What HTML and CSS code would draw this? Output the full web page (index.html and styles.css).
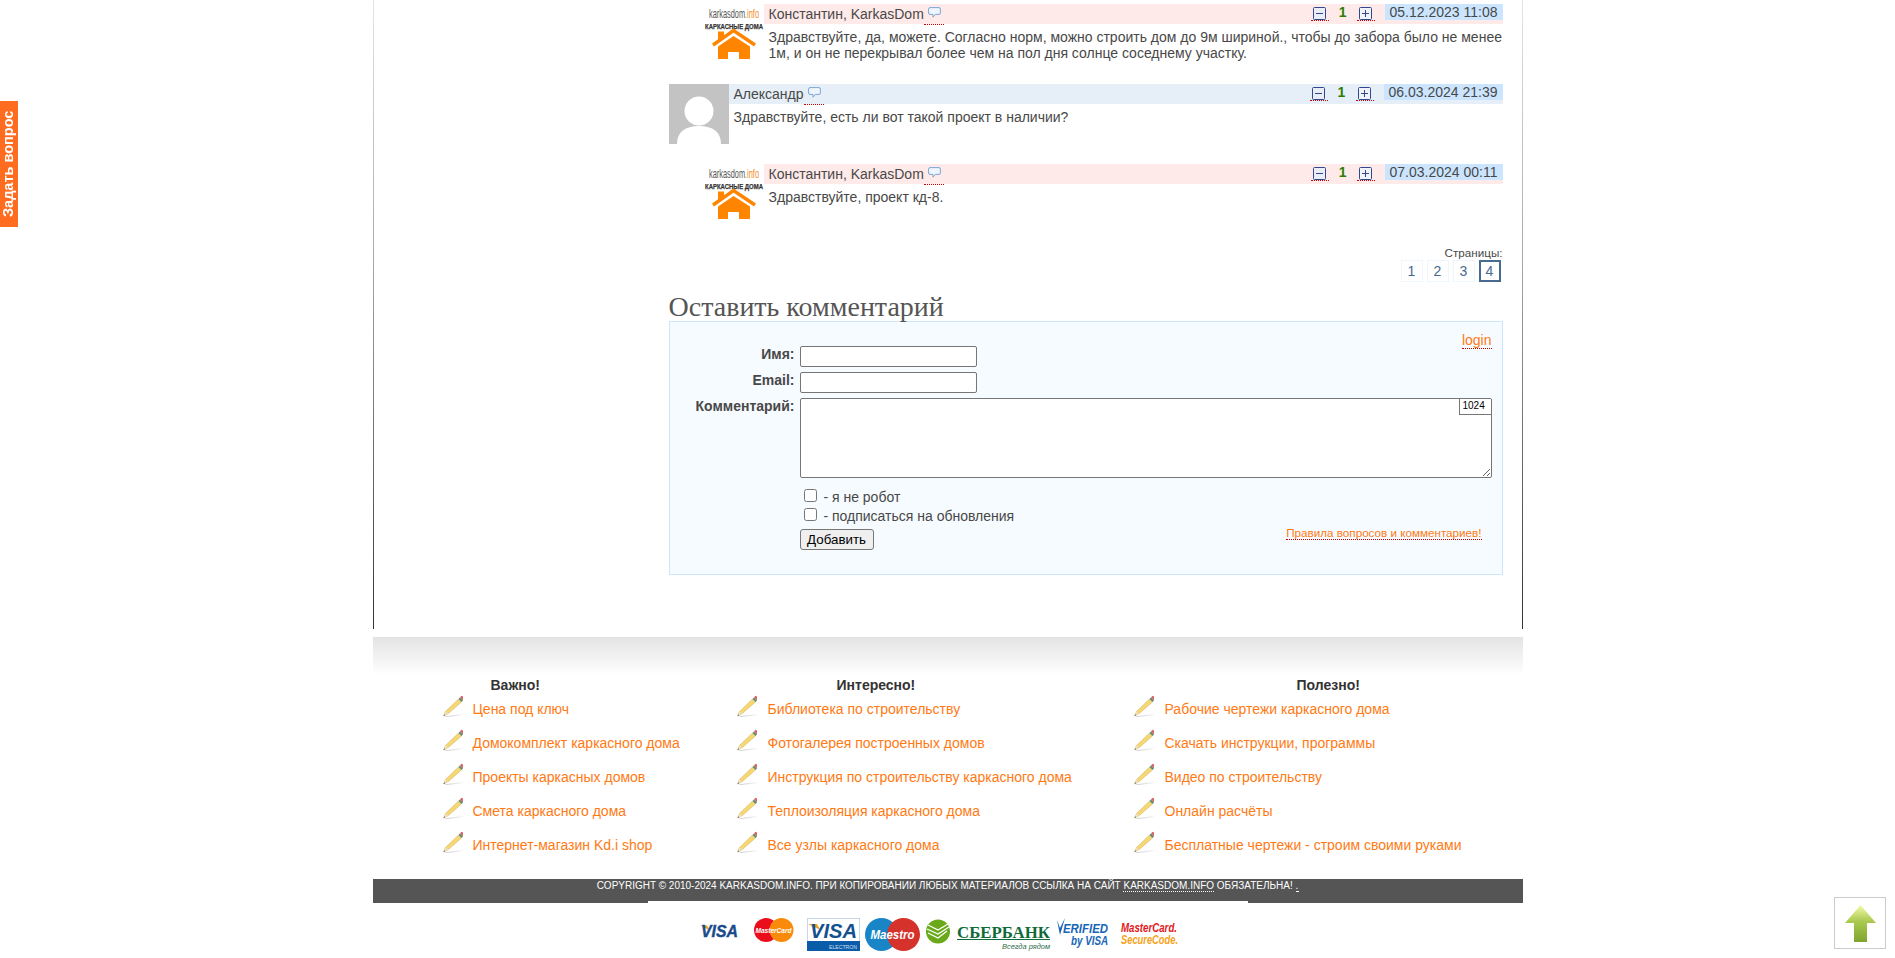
FILE: index.html
```html
<!DOCTYPE html>
<html lang="ru">
<head>
<meta charset="utf-8">
<title>Каркасный дом</title>
<link rel="stylesheet" href="styles.css">
</head>
<body>
<svg class="defs" width="0" height="0" aria-hidden="true">
  <defs>
    <linearGradient id="arrowGrad" x1="0" y1="0" x2="0" y2="1"><stop offset="0" stop-color="#f4fba8"/><stop offset=".45" stop-color="#a9c94e"/><stop offset="1" stop-color="#7fa42f"/></linearGradient>
    <linearGradient id="shadowGrad" x1="0" y1="0" x2="1" y2="0"><stop offset="0" stop-color="#999"/><stop offset="1" stop-color="#f4f4f4"/></linearGradient>
    <symbol id="bubble" viewBox="0 0 13 11">
      <path d="M2 .6h9a1.4 1.4 0 0 1 1.4 1.4v4a1.4 1.4 0 0 1-1.4 1.4H7.2L5 10.2V7.4H2A1.4 1.4 0 0 1 .6 6V2A1.4 1.4 0 0 1 2 .6z" fill="#eef5fc" stroke="#7ea6d2"/>
    </symbol>
    <symbol id="minus" viewBox="0 0 13 13">
      <rect x=".5" y=".5" width="12" height="12" rx="1" fill="#e9edf5" stroke="#33478f"/>
      <path d="M3 6.5h7" stroke="#33478f"/>
    </symbol>
    <symbol id="plus" viewBox="0 0 13 13">
      <rect x=".5" y=".5" width="12" height="12" rx="1" fill="#f0f3f9" stroke="#33478f"/>
      <path d="M3 6.5h7M6.5 3v7" stroke="#33478f"/>
    </symbol>
    <symbol id="pencil" viewBox="0 0 20 22">
      <path d="M1 21.500 L20 18.800 V20.200 L4 22z" fill="url(#shadowGrad)" opacity=".55"/>
      <path d="M.5 21 L2.500 16.500 L15.500 4 L18.500 7 L5 18.800z" fill="#f6d873" stroke="#d2ad5c" stroke-width=".5"/>
      <path d="M.5 21 L2.500 16.500 L5 18.800z" fill="#eadfc2"/>
      <path d="M.5 21 L1.200 19.300 L2.300 20.300z" fill="#666"/>
      <path d="M15.500 4 L17 2.600 L20 5.600 L18.500 7z" fill="#5d8f72"/>
      <path d="M17 2.600 L18 1.200 Q19 .4 19.800 1.400 Q20.400 3 20 5.600z" fill="#d8636a"/>
    </symbol>
    <symbol id="kdlogo" viewBox="0 0 60 60">
      <text x="5" y="14" class="lg-name" textLength="50" lengthAdjust="spacingAndGlyphs">karkasdom<tspan class="lg-info">.info</tspan></text>
      <text x="1" y="24.500" class="lg-sub" textLength="58" lengthAdjust="spacingAndGlyphs">КАРКАСНЫЕ ДОМА</text>
      <path d="M14 27.500h6v5l-6 4.500z" fill="#ff8400"/>
      <path d="M9 41 L29.500 26.500 L51 41" fill="none" stroke="#ff8400" stroke-width="3.400"/>
      <path d="M14 55V42.500L29.500 32 L46 42.500V55H35V48H24V55z" fill="#ff8400"/>
    </symbol>
  </defs>
</svg>

<a class="ask-tab" href="#">Задать вопрос</a>

<div class="page">
  <main class="main">
    <article class="comment comment-staff">
      <svg class="avatar"><use href="#kdlogo"/></svg>
      <div class="comment-body">
        <header class="comment-head head-staff">
          <span class="author">Константин, KarkasDom</span>
          <a class="reply" href="#"><svg class="bubble"><use href="#bubble"/></svg></a>
          <a class="vote" href="#"><svg class="vote-icon"><use href="#minus"/></svg></a>
          <b class="score">1</b>
          <a class="vote" href="#"><svg class="vote-icon"><use href="#plus"/></svg></a>
          <time class="date">05.12.2023 11:08</time>
        </header>
        <p class="comment-text">Здравствуйте, да, можете. Согласно норм, можно строить дом до 9м шириной., чтобы до забора было не менее 1м, и он не перекрывал более чем на пол дня солнце соседнему участку.</p>
      </div>
    </article>

    <article class="comment">
      <svg class="avatar" viewBox="0 0 60 60"><rect width="60" height="60" fill="#c3c3c3"/><circle cx="30" cy="27" r="14.500" fill="#fff"/><path d="M8 60c0-12 8-18 22-18s22 6 22 18z" fill="#fff"/></svg>
      <div class="comment-body">
        <header class="comment-head head-user">
          <span class="author">Александр</span>
          <a class="reply" href="#"><svg class="bubble"><use href="#bubble"/></svg></a>
          <a class="vote" href="#"><svg class="vote-icon"><use href="#minus"/></svg></a>
          <b class="score">1</b>
          <a class="vote" href="#"><svg class="vote-icon"><use href="#plus"/></svg></a>
          <time class="date">06.03.2024 21:39</time>
        </header>
        <p class="comment-text">Здравствуйте, есть ли вот такой проект в наличии?</p>
      </div>
    </article>

    <article class="comment comment-staff">
      <svg class="avatar"><use href="#kdlogo"/></svg>
      <div class="comment-body">
        <header class="comment-head head-staff">
          <span class="author">Константин, KarkasDom</span>
          <a class="reply" href="#"><svg class="bubble"><use href="#bubble"/></svg></a>
          <a class="vote" href="#"><svg class="vote-icon"><use href="#minus"/></svg></a>
          <b class="score">1</b>
          <a class="vote" href="#"><svg class="vote-icon"><use href="#plus"/></svg></a>
          <time class="date">07.03.2024 00:11</time>
        </header>
        <p class="comment-text">Здравствуйте, проект кд-8.</p>
      </div>
    </article>

    <nav class="pager">
      <div class="pager-label">Страницы:</div>
      <div class="pager-list">
        <a class="pager-item" href="#">1</a>
        <a class="pager-item" href="#">2</a>
        <a class="pager-item" href="#">3</a>
        <a class="pager-item pager-current" href="#">4</a>
      </div>
    </nav>

    <h2 class="form-title">Оставить комментарий</h2>
    <form class="comment-form">
      <div class="login-row"><a class="login" href="#">login</a></div>
      <div class="form-grid">
        <label class="field-label">Имя:</label>
        <input class="text-input" type="text">
        <label class="field-label">Email:</label>
        <input class="text-input" type="text">
        <label class="field-label">Комментарий:</label>
        <div class="area-wrap">
          <textarea class="text-area"></textarea>
          <span class="counter">1024</span>
        </div>
        <div class="form-rest">
          <label class="check-row"><input class="check" type="checkbox"> - я не робот</label>
          <label class="check-row"><input class="check" type="checkbox"> - подписаться на обновления</label>
          <div class="submit-row">
            <button class="submit" type="button">Добавить</button>
            <a class="rules" href="#">Правила вопросов и комментариев!</a>
          </div>
        </div>
      </div>
    </form>
  </main>

  <footer class="footer">
    <div class="footer-shade"></div>
    <div class="footer-cols">
      <section class="col col-a">
        <h4 class="col-title">Важно!</h4>
        <a class="col-link" href="#"><svg class="pencil"><use href="#pencil"/></svg><span>Цена под ключ</span></a>
        <a class="col-link" href="#"><svg class="pencil"><use href="#pencil"/></svg><span>Домокомплект каркасного дома</span></a>
        <a class="col-link" href="#"><svg class="pencil"><use href="#pencil"/></svg><span>Проекты каркасных домов</span></a>
        <a class="col-link" href="#"><svg class="pencil"><use href="#pencil"/></svg><span>Смета каркасного дома</span></a>
        <a class="col-link" href="#"><svg class="pencil"><use href="#pencil"/></svg><span>Интернет-магазин Kd.i shop</span></a>
      </section>
      <section class="col col-b">
        <h4 class="col-title">Интересно!</h4>
        <a class="col-link" href="#"><svg class="pencil"><use href="#pencil"/></svg><span>Библиотека по строительству</span></a>
        <a class="col-link" href="#"><svg class="pencil"><use href="#pencil"/></svg><span>Фотогалерея построенных домов</span></a>
        <a class="col-link" href="#"><svg class="pencil"><use href="#pencil"/></svg><span>Инструкция по строительству каркасного дома</span></a>
        <a class="col-link" href="#"><svg class="pencil"><use href="#pencil"/></svg><span>Теплоизоляция каркасного дома</span></a>
        <a class="col-link" href="#"><svg class="pencil"><use href="#pencil"/></svg><span>Все узлы каркасного дома</span></a>
      </section>
      <section class="col col-c">
        <h4 class="col-title">Полезно!</h4>
        <a class="col-link" href="#"><svg class="pencil"><use href="#pencil"/></svg><span>Рабочие чертежи каркасного дома</span></a>
        <a class="col-link" href="#"><svg class="pencil"><use href="#pencil"/></svg><span>Скачать инструкции, программы</span></a>
        <a class="col-link" href="#"><svg class="pencil"><use href="#pencil"/></svg><span>Видео по строительству</span></a>
        <a class="col-link" href="#"><svg class="pencil"><use href="#pencil"/></svg><span>Онлайн расчёты</span></a>
        <a class="col-link" href="#"><svg class="pencil"><use href="#pencil"/></svg><span>Бесплатные чертежи - строим своими руками</span></a>
      </section>
    </div>
    <div class="copyright">Copyright © 2010-2024 karkasdom.info. При копировании любых материалов ссылка на сайт <a class="copy-link" href="#">karkasdom.info</a> обязательна! <a class="copy-link" href="#">.</a></div>
    <div class="payments">
      <svg class="pay-logos" width="530" height="34" viewBox="0 0 530 34">
        <path d="M0 7.500h7l3 5z" fill="#e8a62c"/>
        <text x="1" y="19" class="pay-it pay-visa" textLength="37" lengthAdjust="spacingAndGlyphs">VISA</text>

        <circle cx="66" cy="12" r="12" fill="#eb0d1c"/>
        <circle cx="81.500" cy="12" r="12" fill="#f98a0c"/>
        <text x="55.500" y="14.500" class="pay-it pay-mc" textLength="36" lengthAdjust="spacingAndGlyphs">MasterCard</text>

        <rect x="107.500" y=".500" width="52" height="32" fill="#fff" stroke="#c4d6e8"/>
        <rect x="107" y="23" width="53" height="10" fill="#0a5ba8"/>
        <path d="M108 6h9l3.500 6z" fill="#e8a62c"/>
        <text x="110" y="20" class="pay-it pay-visa2" textLength="47" lengthAdjust="spacingAndGlyphs">VISA</text>
        <text x="129" y="31" class="pay-elec" textLength="28" lengthAdjust="spacingAndGlyphs">ELECTRON</text>

        <circle cx="181.500" cy="16.500" r="16.500" fill="#1a85c6"/>
        <circle cx="203.500" cy="16.500" r="16.500" fill="#d5322c"/>
        <text x="170.500" y="21" class="pay-it pay-maestro" textLength="44" lengthAdjust="spacingAndGlyphs">Maestro</text>

        <circle cx="238" cy="13.500" r="12" fill="#6aa919"/>
        <path d="M228 7l10 5 10-6M227 11l11 5 11-7M228 15l10 5 9-7" fill="none" stroke="#fff" stroke-width="1.300"/>
        <text x="257" y="20" class="pay-sber" textLength="93" lengthAdjust="spacingAndGlyphs">СБЕРБАНК</text>
        <rect x="257" y="21" width="93" height="1" fill="#0f6b38"/>
        <text x="302" y="31" class="pay-sber-sub" textLength="48" lengthAdjust="spacingAndGlyphs">Всегда рядом</text>

        <path d="M357 2l3 8 5-10-5 17z" fill="#1565b8"/>
        <text x="363" y="15" class="pay-it pay-ver" textLength="45" lengthAdjust="spacingAndGlyphs">ERIFIED</text>
        <text x="371" y="27" class="pay-it pay-by" textLength="37" lengthAdjust="spacingAndGlyphs">by VISA</text>

        <text x="421" y="14" class="pay-it pay-mc-red" textLength="56" lengthAdjust="spacingAndGlyphs">MasterCard.</text>
        <text x="421" y="25.500" class="pay-it pay-mc-or" textLength="57" lengthAdjust="spacingAndGlyphs">SecureCode.</text>
      </svg>
    </div>
  </footer>
</div>

<a class="to-top" href="#">
  <svg class="to-top-icon" viewBox="0 0 31 37"><path d="M15.500 0L31 18H22V37H9V18H0z" fill="url(#arrowGrad)"/></svg>
</a>
</body>
</html>
```

FILE: styles.css
```css
* { box-sizing: border-box; }

html, body { margin: 0; padding: 0; }

body {
  background: #fff;
  color: #484848;
  font-family: "Liberation Sans", Arial, sans-serif;
  font-size: 14px;
}

a { color: inherit; text-decoration: none; }

.defs { position: absolute; }

.lg-name { font: 13px "Liberation Sans", sans-serif; fill: #555; }
.lg-info { fill: #f08a24; }
.lg-sub { font: bold 7.500px "Liberation Sans", sans-serif; fill: #333; stroke: #333; stroke-width: .25px; }

/* floating controls */
.ask-tab {
  position: fixed;
  left: 0;
  top: 101px;
  width: 18px;
  height: 126px;
  padding-left: 2px;
  background: #ff6b1f;
  color: #fff;
  font-weight: bold;
  font-size: 14.500px;
  line-height: 16px;
  text-align: center;
  writing-mode: vertical-rl;
  transform: rotate(180deg);
}

.to-top {
  position: fixed;
  left: 1834px;
  top: 897px;
  width: 52px;
  height: 52px;
  background: #fff;
  border: 1px solid #ccc;
  display: flex;
  justify-content: center;
  padding-top: 7px;
}

.to-top-icon { width: 31px; height: 37px; }

/* page */
.page { width: 1150px; margin: 0 auto; }

.main {
  padding: 4px 19px 54px 295px;
  border-style: solid;
  border-width: 0 1px;
  border-image: linear-gradient(#e4e4e4, #aaa 40%, #333) 1;
}

/* comments */
.comment { display: flex; height: 60px; margin-bottom: 20px; }
.comment-staff { padding-left: 35px; }

.avatar { width: 60px; height: 60px; flex: none; }

.comment-body { flex: 1; min-width: 0; }

.comment-head {
  display: flex;
  align-items: flex-start;
  height: 20px;
  line-height: 20px;
  padding-left: 5px;
}
.head-staff { background: #ffeaea; }
.head-user { background: #e6eff7; }

.reply {
  display: flex;
  width: 20px;
  height: 21px;
  padding: 3px 0 0 4px;
  border-bottom: 1px dotted #c00;
}

.bubble { width: 13px; height: 11px; }

.vote {
  display: block;
  width: 18px;
  height: 17px;
  margin-top: 0;
  padding: 3px 2px 0;
  border-bottom: 1px dotted #c00;
}
.reply + .vote { margin-left: auto; }

.vote-icon { display: block; width: 13px; height: 13px; }

.score {
  width: 28px;
  text-align: center;
  color: #2f7d00;
  line-height: 16px;
  font-size: 14px;
}

.date {
  height: 16px;
  line-height: 16px;
  margin-left: 10px;
  padding: 0 5px;
  background: #cce5ff;
}

.comment-text {
  margin: 5px 0 0;
  padding-left: 5px;
  line-height: 16px;
}

/* pagination */
.pager { text-align: right; }

.pager-label { height: 16px; font-size: 11.660px; line-height: 18px; }

.pager-list { display: flex; justify-content: flex-end; gap: 4px; padding-right: 2px; }

.pager-item {
  width: 22px;
  height: 22px;
  border: 1px solid #f0f7fc;
  color: #466a90;
  line-height: 20px;
  text-align: center;
}

.pager-current { border: 2px solid #466a90; line-height: 18px; }

/* form */
.form-title {
  margin: 0;
  padding-top: 11px;
  height: 39px;
  font: normal 28px/27px "Liberation Serif", "Times New Roman", serif;
  color: #555;
}

.comment-form {
  height: 254px;
  background: #f6fbff;
  border: 1px solid #cce5fb;
}

.login-row {
  height: 24px;
  padding: 11px 10px 0 0;
  line-height: 14px;
  text-align: right;
}

.login {
  color: #ff7a14;
  border-bottom: 1px dotted #c00;
}

.form-grid {
  display: grid;
  grid-template-columns: 125px 692px;
  column-gap: 5px;
  row-gap: 5px;
}

.field-label {
  font-weight: bold;
  line-height: 16px;
  text-align: right;
}

.text-input {
  display: block;
  width: 177px;
  height: 21px;
  padding: 1px 2px;
  background: #fff;
  border: 1px solid #767676;
  border-radius: 2px;
}

.area-wrap { position: relative; height: 80px; }

.text-area {
  display: block;
  width: 692px;
  height: 80px;
  border: 1px solid #767676;
  border-radius: 2px;
  background: #fff;
}

.counter {
  position: absolute;
  right: 0;
  top: 1px;
  width: 33px;
  height: 16px;
  padding-left: 3px;
  background: #fff;
  border: 1px solid #767676;
  border-top: 0;
  color: #000;
  font-size: 10px;
  line-height: 14px;
}

.form-rest { grid-column: 2; padding-top: 5px; }

.check-row { display: block; line-height: 19px; height: 19px; }

.check { margin: 0 3px 6px 4px; vertical-align: middle; }

.submit-row {
  display: flex;
  justify-content: space-between;
  align-items: flex-start;
  padding-right: 10px;
  margin-top: -1px;
}

.submit {
  margin-top: 4px;
  width: 74px;
  height: 21px;
  padding: 0;
  color: #000;
  background: #efefef;
  border: 1px solid #767676;
  border-radius: 3px;
  font: 13.333px "Liberation Sans", Arial, sans-serif;
}

.rules {
  margin-top: 2px;
  color: #ff7a14;
  font-size: 11.660px;
  line-height: 12px;
  border-bottom: 1px dotted #c00;
}

/* footer */
.footer { margin-top: 8px; }

.footer-shade { height: 38px; background: linear-gradient(#e3e3e3, #fff); }

.footer-cols { display: flex; padding-left: 70px; height: 204px; }

.col-a { width: 294px; }
.col-b { width: 397px; }

.col-title {
  margin: 0;
  height: 20px;
  font-size: 14px;
  line-height: 20px;
  color: #333;
}
.col-a .col-title { padding-left: 48px; }
.col-b .col-title { padding-left: 100px; }
.col-c .col-title { padding-left: 163px; }

.col-link {
  display: flex;
  gap: 11px;
  height: 34px;
  color: #ff7a14;
  line-height: 16px;
}
.col-a .col-link { gap: 10px; }

.col-link span { padding-top: 6px; }

.pencil { width: 20px; height: 22px; flex: none; }

.copyright {
  height: 24px;
  background: #555;
  color: #fff;
  font-size: 10px;
  line-height: 13px;
  text-align: center;
  text-transform: uppercase;
}

.copy-link { border-bottom: 1px dotted #fff; }

.payments {
  width: 600px;
  margin: -2px auto 0;
  padding: 17px 0 0 52px;
  background: #fff;
}

.pay-logos { display: block; }

.pay-it { font-family: "Liberation Sans", sans-serif; font-style: italic; font-weight: bold; }
.pay-visa { font-size: 17px; fill: #1a4a8c; stroke: #1a4a8c; stroke-width: .4px; }
.pay-visa2 { font-size: 20px; fill: #14518f; }
.pay-mc { font-size: 8px; fill: #fff; }
.pay-maestro { font-size: 13px; fill: #fff; }
.pay-elec { font: 6px "Liberation Sans", sans-serif; fill: #cfe0f0; }
.pay-sber { font: bold 17px "Liberation Serif", serif; fill: #0f6b38; }
.pay-sber-sub { font: italic 7px "Liberation Sans", sans-serif; fill: #2d6b48; }
.pay-ver { font-size: 13px; fill: #1565b8; }
.pay-by { font-size: 13px; fill: #1565b8; }
.pay-mc-red { font-size: 13px; fill: #e21a22; }
.pay-mc-or { font-size: 13px; fill: #f6a21a; }
```
